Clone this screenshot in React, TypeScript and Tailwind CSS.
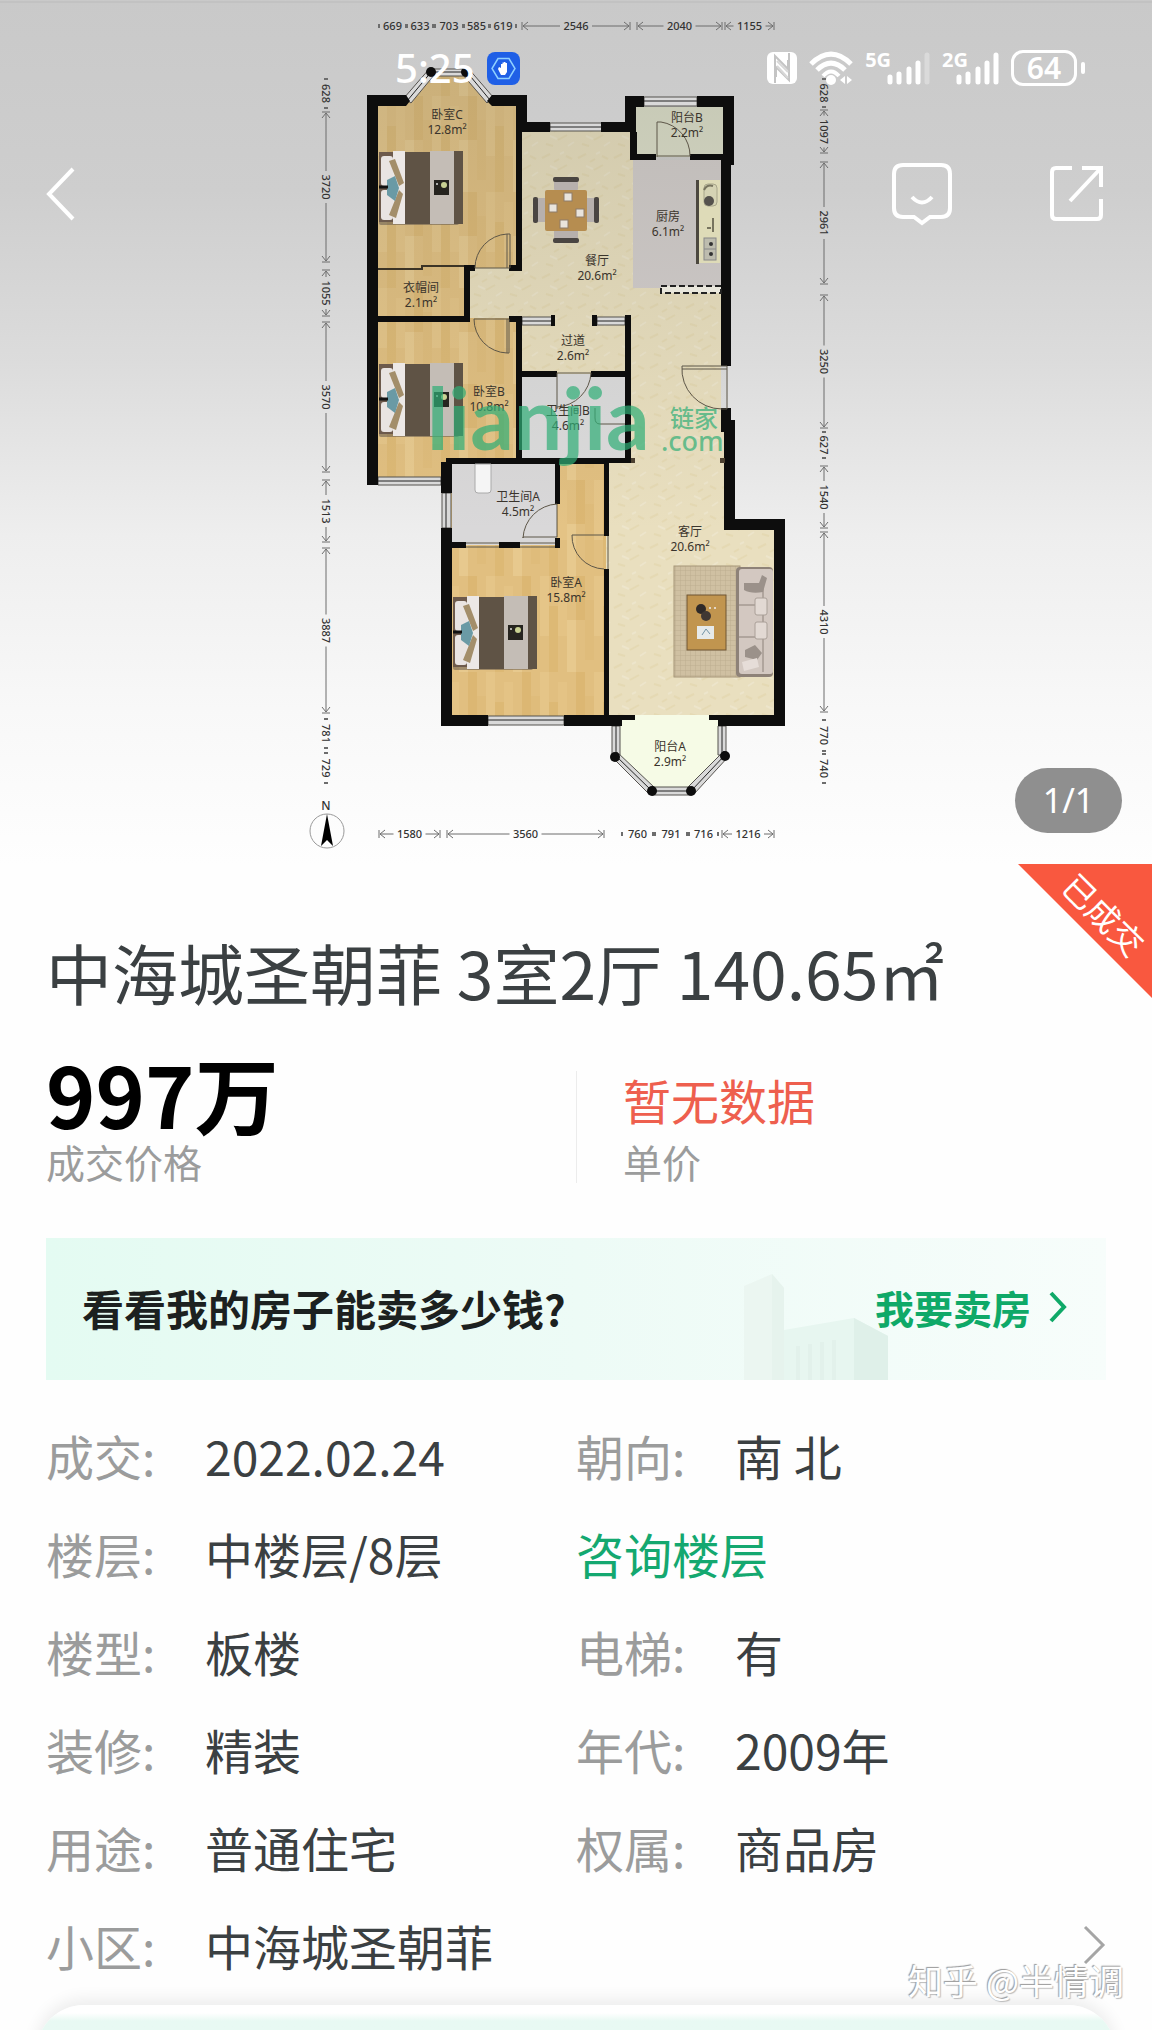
import React from 'react';

const INK = '#0d0d0d';

function Txt({ x, y, children, size = 12 }: { x: number; y: number; children: string; size?: number }) {
  return (
    <text x={x} y={y} fontSize={size} textAnchor="middle" fill="#3a342c">
      {children}
    </text>
  );
}

function Room({ x, y, name, area }: { x: number; y: number; name: string; area: string }) {
  return (
    <>
      <Txt x={x} y={y}>{name}</Txt>
      <Txt x={x} y={y + 15}>{area}</Txt>
    </>
  );
}

/* One run of a dimension chain, drawn from a to b along the x axis. */
function Dim({ a, b, label }: { a: number; b: number; label: string }) {
  const mid = (a + b) / 2;
  const half = label.length === 4 ? 16 : 12;
  const long = b - a > half * 2 + 8;
  return (
    <g stroke="#6d6d6d" strokeWidth="1" fill="none">
      {long ? (
        <>
          <path d={`M${a} -4v8M${a + 6} -4L${a + 1} 0l5 4M${a + 1} 0H${mid - half}`} />
          <path d={`M${b} -4v8M${b - 6} -4L${b - 1} 0l-5 4M${b - 1} 0H${mid + half}`} />
        </>
      ) : (
        <path d={`M${a} -2v4M${b} -2v4`} strokeWidth="2" />
      )}
      <text x={mid} y="4" fontSize="11" fontWeight="500" textAnchor="middle" fill="#333" stroke="none">
        {label}
      </text>
    </g>
  );
}

type Run = [number, number, string];
const topRuns: Run[] = [[379, 406, '669'], [407, 433, '633'], [435, 463, '703'], [464, 489, '585'], [490, 516, '619'], [522, 630, '2546'], [637, 722, '2040'], [725, 774, '1155']];
const bottomRuns: Run[] = [[379, 440, '1580'], [447, 604, '3560'], [622, 653, '760'], [655, 687, '791'], [689, 718, '716'], [722, 774, '1216']];
const leftRuns: Run[] = [[79, 108, '628'], [112, 262, '3720'], [270, 316, '1055'], [322, 472, '3570'], [480, 542, '1513'], [548, 713, '3887'], [719, 748, '781'], [753, 783, '729']];
const rightRuns: Run[] = [[79, 107, '628'], [110, 153, '1097'], [162, 284, '2961'], [295, 428, '3250'], [432, 458, '627'], [466, 528, '1540'], [532, 712, '4310'], [720, 751, '770'], [754, 783, '740']];

function Bed() {
  return (
    <g>
      <rect x="0" y="2" width="80" height="72" rx="2" fill="#5a5047" opacity=".5" />
      <rect x="0" y="1" width="14" height="70" fill="#6d5a4c" />
      <rect x="2" y="5" width="12" height="30" rx="3" fill="#e9e4e2" />
      <rect x="2" y="39" width="12" height="30" rx="3" fill="#e9e4e2" />
      <rect x="14" y="0" width="12" height="73" fill="#ece8e6" />
      <path d="M10 10l6-2l9 24l-5 3z" fill="#a38e6a" />
      <path d="M10 64l7 3l7-24l-4-4z" fill="#a38e6a" />
      <path d="M8 29l8-4l4 12l-4 13l-8-6z" fill="#6a9aa5" />
      <path d="M0 36h9" stroke="#111" strokeWidth="3" />
      <rect x="26" y="1" width="25" height="72" fill="#5f5345" />
      <rect x="51" y="0" width="24" height="73" fill="#c4bdb6" />
      <rect x="75" y="0" width="9" height="73" fill="#5f5345" />
      <rect x="55" y="29" width="15" height="15" fill="#26241f" />
      <circle cx="65" cy="34" r="3" fill="#c9d193" />
      <circle cx="58" cy="33" r="1" fill="#ddd" />
    </g>
  );
}

function Chair() {
  return (
    <g>
      <rect x="-12" y="-33" width="24" height="13" rx="1" fill="#b7b0ad" />
      <rect x="-13" y="-33" width="26" height="5" rx="2" fill="#4a4542" />
    </g>
  );
}

function FloorPlan() {
  return (
    <svg viewBox="0 0 1152 864" className="block h-auto w-full" role="img" aria-label="户型图" fontFamily='"Noto Sans", "Noto Sans CJK SC", sans-serif'>
      <defs>
        <linearGradient id="bg" x1="0" y1="0" x2="0" y2="1">
          <stop offset="0" stopColor="#c9c9c9" />
          <stop offset=".22" stopColor="#cecece" />
          <stop offset=".42" stopColor="#dcdcdc" />
          <stop offset=".62" stopColor="#eeeeee" />
          <stop offset=".82" stopColor="#f8f8f8" />
          <stop offset="1" stopColor="#fefefe" />
        </linearGradient>
        <linearGradient id="shade" gradientUnits="userSpaceOnUse" x1="0" y1="95" x2="0" y2="530">
          <stop offset="0" stopColor="#776" stopOpacity=".2" />
          <stop offset="1" stopColor="#776" stopOpacity="0" />
        </linearGradient>
        <pattern id="wood" width="54" height="96" patternUnits="userSpaceOnUse">
          <rect width="54" height="96" fill="#e1bf80" />
          <rect x="0" y="0" width="9" height="60" fill="#e5c588" />
          <rect x="9" y="30" width="9" height="66" fill="#ddb975" />
          <rect x="18" y="10" width="9" height="50" fill="#e4c385" />
          <rect x="27" y="44" width="9" height="52" fill="#e7c98e" />
          <rect x="36" y="0" width="9" height="44" fill="#dcb773" />
          <rect x="45" y="24" width="9" height="60" fill="#dfbc7b" />
        </pattern>
        <pattern id="stone" width="36" height="30" patternUnits="userSpaceOnUse">
          <rect width="36" height="30" fill="#e9dfbf" />
          <path d="M2 8l8-4M18 20l9-5M26 6l6 3M6 24l7 2M14 12l5-3" stroke="#e5d9b3" strokeWidth="2" />
          <path d="M10 16l7 3M28 26l6-4M20 4l4-2" stroke="#ede5cb" strokeWidth="2" />
        </pattern>
        <pattern id="rug" width="5" height="5" patternUnits="userSpaceOnUse">
          <rect width="5" height="5" fill="#cfc0a2" />
          <path d="M0 0h5M0 0v5" stroke="#bdae90" strokeWidth="1" />
        </pattern>
      </defs>

      <rect width="1152" height="864" fill="url(#bg)" />
      <path d="M0 2h1152" stroke="#c2c2c2" strokeWidth="2" />

      {/* floors */}
      <path d="M516 127H630V160H721V420H728V525H778V720H606V376H520V320H464V268H516z" fill="url(#stone)" />
      <path d="M372 101H409L432 72H466L489 101H520V268H470V318H520V460H446V480H372z" fill="url(#wood)" />
      <path d="M446 460H606V720H446z" fill="url(#wood)" />
      <path d="M633 160H721V288H633z" fill="#d2cdcd" />
      <path d="M636 107H723V157H636z" fill="#dcdfcb" />
      <path d="M522 374H628V460H522z" fill="#dbdbdc" />
      <path d="M452 462H557V545H452z" fill="#d9d8d9" />
      <path d="M620 715H719V755L690 790H652L617 757z" fill="#f6fbe6" />
      <path d="M372 101H409L432 72H466L489 101H520V127H630V101H728V525H446V480H372z" fill="url(#shade)" />

      {/* windows */}
      <g stroke="#55524e" strokeWidth="1" fill="#d9d9d9">
        <path d="M550 123H602V131H550zM644 97H697V106H644zM378 477H441V485H378zM442 493H451V528H442zM488 716H564V725H488zM612 726H620V755H612zM718 726H726V755H718z" />
        <path d="M522 317H552V325H522zM597 317H625V325H597z" />
        <path d="M404 98L430 68L435 74L411 103zM432 69H466V76H432zM468 68L493 97L487 103L463 75zM612 757L649 794L655 788L617 752zM652 787H690V795H652zM687 788L724 751L729 756L694 794z" />
        <path d="M550 127H602M644 101H697M378 481H441M446 493V528M488 720H564M616 726V755M722 726V755M522 321H552M597 321H625M407 101L432 71M432 72H466M466 71L490 100M615 755L652 791H691L726 754" stroke="#222" fill="none" />
      </g>
      <g fill={INK}>
        <circle cx="431" cy="72" r="5" /><circle cx="466" cy="72" r="5" />
        <circle cx="615" cy="757" r="5" /><circle cx="725" cy="756" r="5" />
        <circle cx="652" cy="791" r="5" /><circle cx="691" cy="791" r="5" />
      </g>

      {/* walls */}
      <path
        fill={INK}
        d="M367 95H406L410 101L406 106H378V485H367zM492 95H527V122H550V132H522V271H509V265H516V106H492L487 101z
        M464 265H475V271H470V322H378V316H464zM509 316H522V371H557V377H522V458H625V377H591V371H625V315H631V463H609V536H604V464H560V504H555V464H452V493H441V462H446V458H516V322H509z
        M551 315H555V326H551zM592 315H597V326H592zM601 122H625V96H644V107H636V132H637V154H656V160H630V132H601z
        M697 96H734V165H731V366H721V160H690V154H723V107H697zM721 408H731V420H735V519H785V726H718V720H709V715H774V530H724V432H721z
        M441 528H452V542H466V548H452V715H488V726H441zM499 542H520V548H499zM555 538H560V548H555zM604 569H609V715H635V720H622V726H564V715H604z"
      />
      <path d="M631 458h4v5h-4zM720 458h5v5h-5z" fill="#4c4030" />
      <path d="M378 269H422V266H464" stroke="#3c3426" strokeWidth="2" fill="none" />

      {/* doors */}
      <g fill="none" stroke="#5d5648" strokeWidth="1">
        <path d="M475 268A34 34 0 0 1 507 234H510V268zM474 319A34 34 0 0 0 507 353H509V319z" />
        <path d="M507 234V268M507 319V353" />
        <path d="M557 373V409M591 373A36 36 0 0 1 557 407M557 373H591" />
        <path d="M523 537H557V504A36 36 0 0 0 523 538zM466 547H499M466 543H499M520 547H555M520 543H555" />
        <path d="M604 535H572A33 33 0 0 0 604 569M608 536V569" />
        <path d="M657 157V122H661A34 34 0 0 1 690 156H657" />
        <path d="M727 366V409H722A40 40 0 0 1 682 366zM682 369H727" />
        <path d="M625 424H600Q595 424 595 418V408" />
      </g>
      <path d="M661 286H721V293H661z" fill="#e9e7dc" stroke="#222" strokeWidth="2" strokeDasharray="6 3" />
      <path d="M475 464h16v26q0 3-3 3h-10q-3 0-3-3z" fill="#f5f5f5" stroke="#aaa" />

      {/* furniture */}
      <g transform="translate(379 151)"><Bed /></g>
      <g transform="translate(379 363)"><Bed /></g>
      <g transform="translate(453 596)"><Bed /></g>
      <g transform="translate(566 210)">
        <Chair />
        <g transform="rotate(90)"><Chair /></g>
        <g transform="rotate(180)"><Chair /></g>
        <g transform="rotate(270)"><Chair /></g>
        <rect x="-21" y="-20" width="42" height="41" rx="2" fill="#b68d50" />
        <g fill="#e9e4dc" stroke="#8d7c6a">
          <rect x="-2" y="-17" width="8" height="8" /><rect x="-17" y="-6" width="8" height="8" />
          <rect x="10" y="-1" width="8" height="8" /><rect x="-6" y="10" width="8" height="8" />
        </g>
      </g>
      <g>
        <rect x="696" y="180" width="3" height="84" fill="#4c483f" />
        <rect x="699" y="180" width="21" height="83" fill="#dedbb8" />
        <rect x="704" y="184" width="13" height="22" rx="4" fill="#d5d3b4" stroke="#a8a68b" />
        <circle cx="709" cy="201" r="5" fill="#55524d" />
        <path d="M704 190q3-6 9-4M713 218v14M707 228h4" stroke="#77745f" strokeWidth="2" fill="none" />
        <rect x="704" y="238" width="12" height="22" fill="#bdbcae" stroke="#888" />
        <path d="M704 249h12" stroke="#888" />
        <circle cx="711" cy="244" r="2" fill="#333" /><circle cx="711" cy="254" r="2" fill="#333" />
      </g>
      <g>
        <rect x="674" y="566" width="66" height="111" fill="url(#rug)" stroke="#a69678" />
        <rect x="687" y="595" width="39" height="55" fill="#c1954f" stroke="#6f5433" />
        <circle cx="701" cy="609" r="5" fill="#2f2a28" /><circle cx="706" cy="616" r="5" fill="#403833" />
        <circle cx="710" cy="608" r="1" fill="#eee" /><circle cx="715" cy="608" r="1" fill="#eee" />
        <rect x="697" y="626" width="17" height="13" fill="#e6eaea" />
        <path d="M702 635l4-6l4 5" stroke="#7193a5" fill="none" />
        <rect x="736" y="567" width="37" height="110" rx="4" fill="#8e8278" />
        <rect x="739" y="569" width="34" height="105" rx="3" fill="#d3c8c1" />
        <path d="M739 605h24M739 637h24M763 576v96" stroke="#8d827a" strokeWidth="1" />
        <path d="M744 583h15l3-8l5 3l-4 14q-12 2-19-2z" fill="#9b918a" />
        <rect x="755" y="598" width="12" height="17" rx="2" fill="#e2d9d3" stroke="#aaa098" />
        <rect x="755" y="622" width="12" height="17" rx="2" fill="#e2d9d3" stroke="#aaa098" />
        <path d="M745 650l10-5l7 8l-5 7l-12-3z" fill="#9b918a" />
        <path d="M742 662l15-4l2 9l-15 4z" fill="#e6ddd8" />
      </g>

      {/* room names */}
      <Room x={447} y={119} name="卧室C" area="12.8m²" />
      <Room x={421} y={292} name="衣帽间" area="2.1m²" />
      <Room x={687} y={122} name="阳台B" area="2.2m²" />
      <Room x={668} y={221} name="厨房" area="6.1m²" />
      <Room x={597} y={265} name="餐厅" area="20.6m²" />
      <Room x={573} y={345} name="过道" area="2.6m²" />
      <Room x={489} y={396} name="卧室B" area="10.8m²" />
      <Room x={568} y={415} name="卫生间B" area="4.6m²" />
      <Room x={518} y={501} name="卫生间A" area="4.5m²" />
      <Room x={566} y={587} name="卧室A" area="15.8m²" />
      <Room x={690} y={536} name="客厅" area="20.6m²" />
      <Room x={670} y={751} name="阳台A" area="2.9m²" />

      {/* agency mark */}
      <g fill="#2fae76" fillOpacity=".7">
        <text x="427" y="450" fontSize="86" fontWeight="700" fontFamily="Lato, sans-serif">lianjia</text>
        <text x="670" y="427" fontSize="24" fontWeight="500">链家</text>
        <text x="661" y="451" fontSize="27" fontWeight="500">.com</text>
      </g>

      {/* dimension chains */}
      <g transform="translate(0 26)">{topRuns.map(([a, b, l]) => <Dim key={a} a={a} b={b} label={l} />)}</g>
      <g transform="translate(0 834)">{bottomRuns.map(([a, b, l]) => <Dim key={a} a={a} b={b} label={l} />)}</g>
      <g transform="translate(326 0) rotate(90)">{leftRuns.map(([a, b, l]) => <Dim key={a} a={a} b={b} label={l} />)}</g>
      <g transform="translate(824 0) rotate(90)">{rightRuns.map(([a, b, l]) => <Dim key={a} a={a} b={b} label={l} />)}</g>

      {/* compass */}
      <text x="326" y="810" fontSize="12" fontWeight="500" textAnchor="middle" fill="#333">N</text>
      <circle cx="327" cy="831" r="17" fill="none" stroke="#999" />
      <path d="M327 814L333 846L327 840L321 846z" fill="#000" />
    </svg>
  );
}

function Signal({ label, children }: { label: string; children: React.ReactNode }) {
  return (
    <div className="flex h-9 items-end" role="img" aria-label={label}>
      <span className="-mr-1 self-start text-[20px] leading-5 font-bold">{label}</span>
      {children}
    </div>
  );
}

function StatusBar() {
  return (
    <div className="absolute inset-x-0 top-[50px] flex h-9 items-center justify-between pr-[67px] pl-[395px] text-white">
      <div className="flex items-center gap-3">
        <span className="text-[40px] leading-9 font-medium">5:25</span>
        <svg viewBox="0 0 33 33" className="size-[33px]" aria-hidden="true">
          <rect width="33" height="33" rx="8" fill="#1f5fe6" />
          <path d="M11 6.500H22L28 16.500L22 26.500H11L5 16.500z" fill="none" stroke="#8fd0ff" strokeWidth="1.500" />
          <path d="M12 15l2 1V12h1.500v-1.500H17V10h1.500v1H20v9l-2 3h-4l-3-6z" fill="#fff" />
        </svg>
      </div>
      <div className="flex items-center gap-3">
        <svg viewBox="0 0 30 32" className="h-8 w-[30px]" aria-label="NFC" role="img">
          <rect width="30" height="32" rx="6" fill="#fff" />
          <path d="M8 31V4L21 17V8M22 1V28L9 15V25" fill="none" stroke="#c4c4c4" strokeWidth="2" />
          <path d="M10 9L21 20M10 14L21 26" fill="none" stroke="#d8d8d8" strokeWidth="2" />
        </svg>
        <svg viewBox="0 0 44 34" className="h-[34px] w-11" aria-label="Wi-Fi" role="img">
          <g fill="none" stroke="#fff" strokeWidth="5">
            <path d="M2 13Q22 -7 42 13" /><path d="M8 19Q22 5 36 19" /><path d="M14 25Q22 16 30 25" strokeWidth="4" />
          </g>
          <circle cx="22" cy="29" r="5" fill="#fff" />
          <path d="M36 25v8l-5-4zM38 25v8l5-4z" fill="#fff" />
        </svg>
        <Signal label="5G">
          <svg viewBox="0 0 43 36" className="h-9 w-[43px]" stroke="#fff" strokeWidth="5" strokeLinecap="round" aria-hidden="true">
            <path d="M3 27V32M12 24V32M22 19V32M31 13V32" />
            <path d="M40 5V32" className="opacity-30" />
          </svg>
        </Signal>
        <Signal label="2G">
          <svg viewBox="0 0 43 36" className="-ml-2 h-9 w-[43px]" stroke="#fff" strokeWidth="5" strokeLinecap="round" aria-hidden="true">
            <path d="M3 27V32M12 24V32M22 19V32M31 13V32M40 5V32" />
          </svg>
        </Signal>
        <div className="flex items-center gap-1">
          <span className="flex h-9 w-[66px] items-center justify-center rounded-xl border-3 border-white text-[30px] leading-none font-semibold">64</span>
          <span className="h-3 w-1 rounded-full bg-white" />
        </div>
      </div>
    </div>
  );
}

function NavBar() {
  return (
    <div className="absolute inset-x-0 top-[162px] flex items-center justify-between pr-[47px] pl-[45px]">
      <button type="button" aria-label="返回">
        <svg viewBox="0 0 30 64" className="h-16 w-[30px]" fill="none" stroke="#fff" strokeWidth="4"><path d="M28 7L4 32L28 57" /></svg>
      </button>
      <div className="flex items-center gap-24">
        <button type="button" aria-label="消息">
          <svg viewBox="0 0 62 64" className="h-16 w-[62px]" fill="none" stroke="#fff" strokeWidth="4">
            <path d="M12 3H50Q59 3 59 12V46Q59 55 50 55H39L31 61L23 55H12Q3 55 3 46V12Q3 3 12 3z" />
            <path d="M21 35Q31 46 41 35" />
          </svg>
        </button>
        <button type="button" aria-label="分享">
          <svg viewBox="0 0 56 64" className="h-16 w-14" fill="none" stroke="#fff" strokeWidth="4">
            <path d="M23 6H7Q3 6 3 10V53Q3 57 7 57H48Q52 57 52 53V37M33 6H52V25M52 6L21 39" />
          </svg>
        </button>
      </div>
    </div>
  );
}

function Field({ label, value }: { label: string; value: string }) {
  return (
    <div className="flex h-[98px] items-center">
      <dt className="w-[159px] shrink-0 text-[#9b9c9c]">{label}:</dt>
      <dd>{value}</dd>
    </div>
  );
}

export default function App() {
  return (
    <main className='relative min-h-screen overflow-hidden bg-[#fefefe] font-["Noto_Sans_CJK_SC",sans-serif] text-[#3b4042]'>
      <section className='relative font-["Noto_Sans",sans-serif]'>
        <FloorPlan />
        <StatusBar />
        <NavBar />
        <span className="absolute right-[30px] bottom-[31px] flex h-[65px] w-[107px] items-center justify-center rounded-full bg-[#8f8f8f] text-[34px] text-white">1/1</span>
      </section>

      <section className="relative px-[46px] pt-[59px]">
        <div className="absolute top-0 right-0 size-[134px] bg-[#f9583f] [clip-path:polygon(0_0,100%_0,100%_100%)]">
          <span className="absolute top-[34px] left-[37px] w-[99px] rotate-45 text-center text-[33px] leading-8 whitespace-nowrap text-white">已成交</span>
        </div>

        <h1 className="text-[66px] leading-[96px]">中海城圣朝菲 3室2厅 140.65㎡</h1>

        <div className="mt-8 grid grid-cols-2">
          <div>
            <p className="text-[84px] leading-[84px] font-bold text-black">997万</p>
            <p className="text-[39px] leading-[52px] text-[#9b9c9c]">成交价格</p>
          </div>
          <div className="flex">
            <span className="mt-5 mb-1 w-px bg-[#ececec]" />
            <div className="pt-3 pl-[46px]">
              <p className="text-[48px] leading-[72px] text-[#ee5f4e]">暂无数据</p>
              <p className="text-[39px] leading-[52px] text-[#9b9c9c]">单价</p>
            </div>
          </div>
        </div>

        <a href="#sell" className="relative mt-[51px] flex h-[142px] items-center justify-between bg-linear-to-r from-[#e4fbf2] via-[#edfbf6] to-[#f7fdfb] pr-[39px] pb-1 pl-9 font-bold">
          <svg viewBox="0 0 150 106" className="absolute right-[218px] bottom-0 h-[106px] w-[150px]" aria-hidden="true">
            <path d="M6 12L34 0L46 14V106H6z" fill="#ebf6f1" />
            <path d="M34 0L46 14V106H34z" fill="#e6f3ed" />
            <path d="M46 56L116 44L150 62V106H46z" fill="#e7f6f0" />
            <path d="M116 44L150 62V106H116z" fill="#dff0e9" />
            <path d="M60 72v34M72 70v36M84 68v38M96 66v40" stroke="#e2f1eb" strokeWidth="4" />
          </svg>
          <span className="relative text-[42px] text-[#1c2120]">看看我的房子能卖多少钱?</span>
          <span className="relative flex items-center gap-[18px] text-[39px] text-[#0fa968]">
            我要卖房
            <svg viewBox="0 0 18 32" className="h-8 w-[18px]" fill="none" stroke="currentColor" strokeWidth="4" aria-hidden="true"><path d="M2 2L15 16L2 30" /></svg>
          </span>
        </a>

        <dl className="mt-[26px] grid grid-cols-2 text-[48px]">
          <Field label="成交" value="2022.02.24" />
          <Field label="朝向" value="南 北" />
          <Field label="楼层" value="中楼层/8层" />
          <div className="flex h-[98px] items-center">
            <dd><a href="#floor" className="text-[#14a870]">咨询楼层</a></dd>
          </div>
          <Field label="楼型" value="板楼" />
          <Field label="电梯" value="有" />
          <Field label="装修" value="精装" />
          <Field label="年代" value="2009年" />
          <Field label="用途" value="普通住宅" />
          <Field label="权属" value="商品房" />
          <div className="col-span-2 flex items-center justify-between">
            <Field label="小区" value="中海城圣朝菲" />
            <button type="button" aria-label="查看小区">
              <svg viewBox="0 0 24 40" className="h-10 w-6" fill="none" stroke="#a5a5a5" strokeWidth="3"><path d="M3 2L21 20L3 38" /></svg>
            </button>
          </div>
        </dl>
      </section>

      <div className="relative -mt-5 h-14 overflow-hidden px-9 pt-[31px]" aria-hidden="true">
        <div className="h-40 rounded-t-[48px] bg-linear-to-b from-white from-5% to-[#e8f9f3] to-10% shadow-[0_-6px_16px_rgba(0,0,0,0.07)]" />
      </div>
      <p className="absolute right-[28px] bottom-[24px] text-[35px] leading-[52px] text-white [text-shadow:-1px_-1px_1px_#999,1px_1px_1px_#bbb]">知乎 @半情调</p>
    </main>
  );
}
